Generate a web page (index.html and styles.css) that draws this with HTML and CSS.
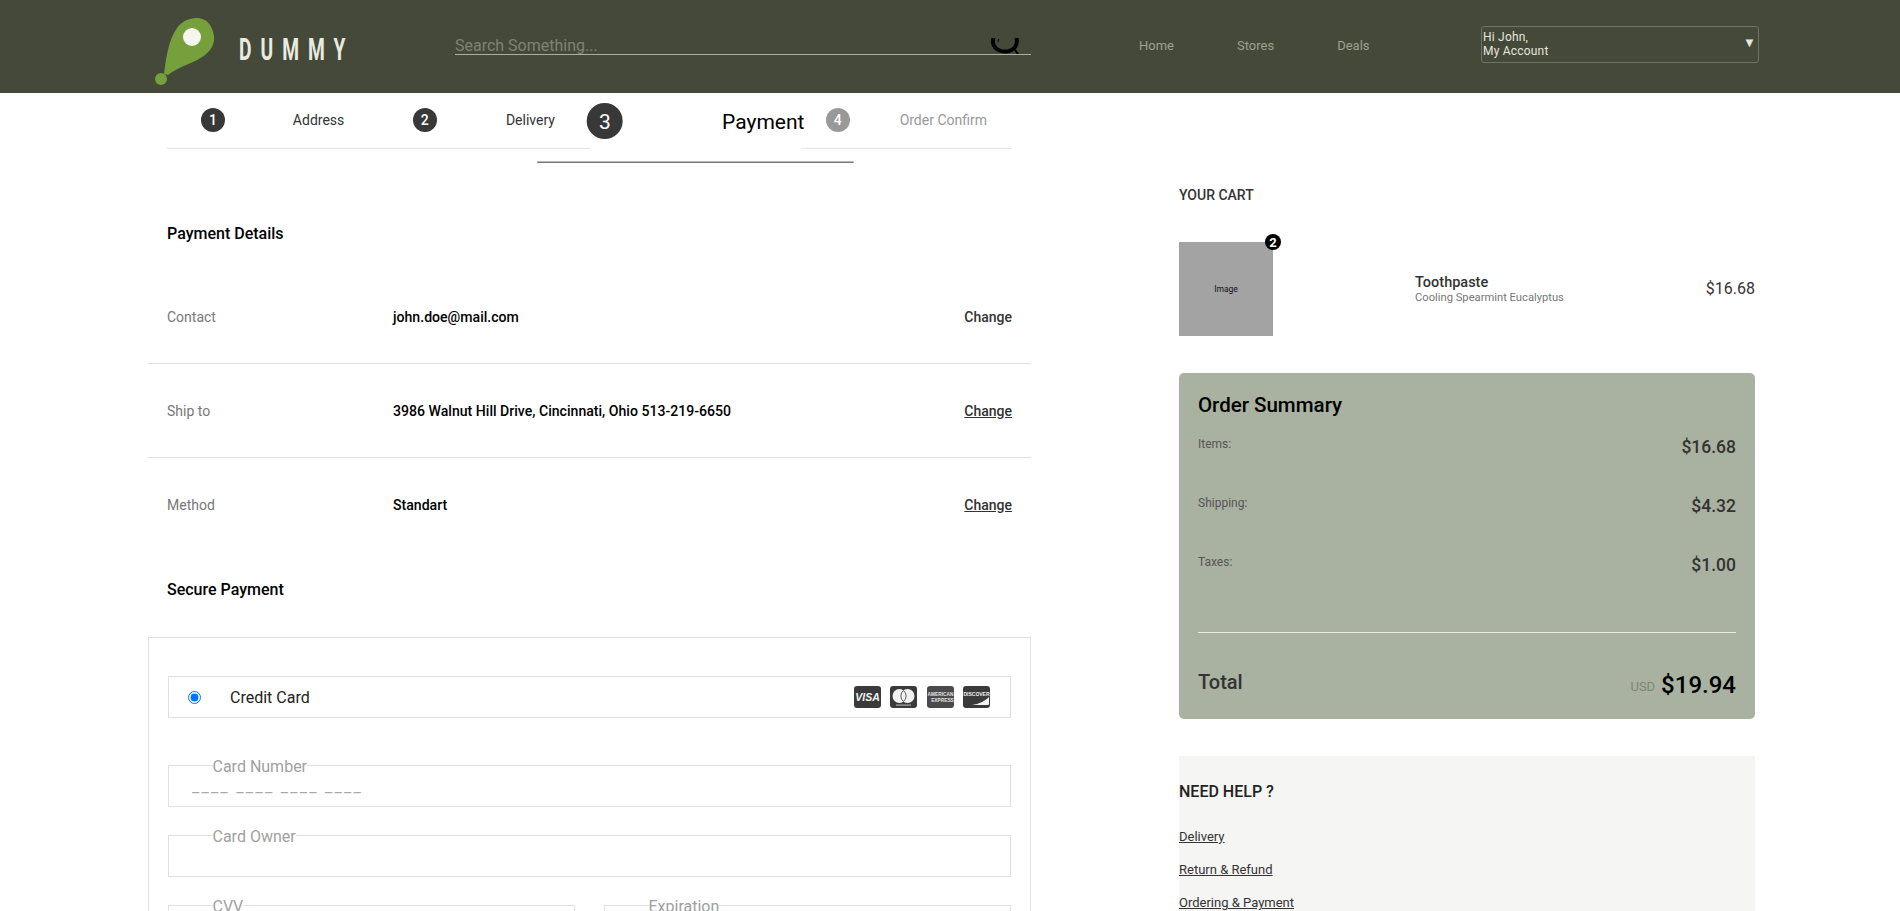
FILE: index.html
```html
<!DOCTYPE html>
<html lang="en">
<head>
    <meta charset="UTF-8">
    <meta name="viewport" content="width=device-width, initial-scale=1.0">
    <title>Checkout - Payment</title>
    <link rel="stylesheet" href="styles.css">
</head>
<body>
    <header class="topbar">
        <a class="logo" href="#">
            <svg class="logo-mark" width="62" height="70" viewBox="0 0 62 70">
                <path d="M9 57 C11 42 13 24 22 11 C30 0 48 -3 55 8 C62 20 60 30 50 38 C40 46 22 50 13 58 Z" fill="#76a03c"/>
                <circle cx="6" cy="62" r="6" fill="#76a03c"/>
                <circle cx="37" cy="20" r="9" fill="#f6f6ee"/>
            </svg>
            <span class="logo-text">DUMMY</span>
        </a>
        <form class="search">
            <input class="search-input" type="text" placeholder="Search Something...">
            <svg class="search-icon" width="28" height="16" viewBox="0 0 28 16">
                <path d="M2.5 0 C0 8 6 13.5 14 13.5 C22 13.5 27.5 8 25.5 0" fill="none" stroke="#000" stroke-width="4"/>
                <path d="M24 12 L27 16" stroke="#000" stroke-width="2"/>
                <path d="M7.5 1 L7 4" stroke="#000" stroke-width="1"/>
            </svg>
        </form>
        <nav class="nav">
            <a href="#">Home</a>
            <a href="#">Stores</a>
            <a href="#">Deals</a>
        </nav>
        <div class="account">
            <div>Hi John,<br>My Account</div>
            <span class="account-arrow">&#9660;</span>
        </div>
    </header>

    <main class="page">
        <section class="left">
            <ol class="steps">
                <li class="step"><span class="step-num">1</span><span>Address</span></li>
                <li class="step"><span class="step-num">2</span><span>Delivery</span></li>
                <li class="step active"><span class="step-num">3</span><span>Payment</span></li>
                <li class="step todo"><span class="step-num">4</span><span>Order Confirm</span></li>
            </ol>

            <h2 class="section-title details-title">Payment Details</h2>
            <div class="info-row">
                <span class="info-label">Contact</span>
                <span class="info-value">john.doe@mail.com</span>
                <a class="info-change plain" href="#">Change</a>
            </div>
            <div class="info-row">
                <span class="info-label">Ship to</span>
                <span class="info-value">3986 Walnut Hill Drive, Cincinnati, Ohio 513-219-6650</span>
                <a class="info-change" href="#">Change</a>
            </div>
            <div class="info-row last">
                <span class="info-label">Method</span>
                <span class="info-value">Standart</span>
                <a class="info-change" href="#">Change</a>
            </div>

            <h2 class="section-title secure-title">Secure Payment</h2>
            <div class="pay-box">
                <label class="pay-option">
                    <input type="radio" name="pay" checked>
                    <span class="pay-name">Credit Card</span>
                    <span class="cards">
                        <svg width="27" height="22" viewBox="0 0 27 22"><rect width="27" height="22" rx="3" fill="#3a3a3a"/><text x="13.5" y="15" text-anchor="middle" class="card-visa">VISA</text></svg>
                        <svg width="27" height="22" viewBox="0 0 27 22"><rect width="27" height="22" rx="3" fill="#3a3a3a"/><circle cx="9.5" cy="10" r="7" fill="#f2f2f2"/><circle cx="17.5" cy="10" r="7" fill="#f2f2f2"/><path d="M13.5 4.5 a7 7 0 0 1 0 11 a7 7 0 0 1 0 -11" fill="none" stroke="#3a3a3a" stroke-width=".8"/><rect x="6" y="18.5" width="15" height="1.2" fill="#aaa"/></svg>
                        <svg width="27" height="22" viewBox="0 0 27 22"><rect width="27" height="22" rx="3" fill="#4a4a4a"/><text x="13.5" y="9.5" text-anchor="middle" class="card-amex">AMERICAN</text><text x="15.5" y="15.5" text-anchor="middle" class="card-amex">EXPRESS</text></svg>
                        <svg width="27" height="22" viewBox="0 0 27 22"><rect width="27" height="22" rx="3" fill="#3a3a3a"/><path d="M26 11 V18 a1 1 0 0 1 -1 1 H9 C16 18 22 15 26 11 Z" fill="#f2f2f2"/><text x="13.5" y="10" text-anchor="middle" class="card-disc">DISCOVER</text></svg>
                    </span>
                </label>

                <fieldset class="field">
                    <legend>Card Number</legend>
                    <input class="field-input mask" type="text" placeholder="____ ____ ____ ____">
                </fieldset>
                <fieldset class="field">
                    <legend>Card Owner</legend>
                    <input class="field-input" type="text">
                </fieldset>
                <div class="field-pair">
                    <fieldset class="field">
                        <legend>CVV</legend>
                        <input class="field-input" type="text">
                    </fieldset>
                    <fieldset class="field">
                        <legend>Expiration</legend>
                        <input class="field-input" type="text">
                    </fieldset>
                </div>
            </div>
        </section>

        <aside class="right">
            <h3 class="cart-title">YOUR CART</h3>
            <div class="cart-item">
                <div class="thumb">Image<span class="thumb-badge">2</span></div>
                <div class="cart-info">
                    <div class="cart-name">Toothpaste</div>
                    <div class="cart-desc">Cooling Spearmint Eucalyptus</div>
                </div>
                <div class="cart-price">$16.68</div>
            </div>

            <div class="summary">
                <h3 class="summary-title">Order Summary</h3>
                <div class="summary-row"><span>Items:</span><strong>$16.68</strong></div>
                <div class="summary-row"><span>Shipping:</span><strong>$4.32</strong></div>
                <div class="summary-row"><span>Taxes:</span><strong>$1.00</strong></div>
                <div class="summary-total">
                    <span class="total-label">Total</span>
                    <span class="total-value"><small>USD</small> $19.94</span>
                </div>
            </div>

            <div class="help">
                <h3 class="help-title">NEED HELP ?</h3>
                <a href="#">Delivery</a>
                <a href="#">Return &amp; Refund</a>
                <a href="#">Ordering &amp; Payment</a>
            </div>
        </aside>
    </main>
</body>
</html>
```

FILE: styles.css
```css
html, body {
    height: 911px;
    overflow: hidden;
}
body {
    margin: 0;
    font-family: Roboto, "Liberation Sans", sans-serif;
    font-size: 14px;
    color: #333;
    background-color: #fff;
}
a {
    color: inherit;
}

/* top bar */
.topbar {
    height: 93px;
    background-color: #45493a;
    display: flex;
    align-items: center;
    padding-left: 155px;
    box-sizing: border-box;
}
.logo {
    width: 300px;
    display: flex;
    align-items: center;
    text-decoration: none;
}
.logo-mark {
    margin-top: 11px;
}
.logo-text {
    margin-left: 22px;
    margin-top: 6px;
    font-size: 31px;
    font-weight: 700;
    letter-spacing: 14.5px;
    color: #e9ebe0;
    transform: scaleX(.62);
    transform-origin: left;
}
.search {
    width: 576px;
    position: relative;
}
.search-input {
    width: 100%;
    box-sizing: border-box;
    height: 18px;
    margin-top: -1px;
    display: block;
    padding: 0;
    background: none;
    border: none;
    border-bottom: 1px solid #a9b1a0;
    font-family: inherit;
    font-size: 16px;
    outline: none;
}
.search-input::placeholder {
    color: #7f8374;
}
.search-icon {
    position: absolute;
    right: 12px;
    bottom: 1px;
}
.nav {
    width: 450px;
    padding-left: 108px;
    box-sizing: border-box;
    display: flex;
    gap: 63px;
    margin-top: -2px;
}
.nav a {
    font-size: 13px;
    color: #98a38b;
    text-decoration: none;
}
.account {
    width: 278px;
    height: 37px;
    box-sizing: border-box;
    border: 1px solid #6e7364;
    border-radius: 3px;
    margin-top: -4px;
    padding-left: 1px;
    display: flex;
    justify-content: space-between;
    align-items: center;
    font-size: 12px;
    letter-spacing: .2px;
    line-height: 14px;
    color: #e4e7dc;
}
.account > div {
    margin-top: -1px;
}
.account-arrow {
    font-size: 13px;
    padding-right: 2px;
    margin-top: -3px;
}

/* page */
.page {
    display: flex;
    padding-left: 148px;
}
.left {
    width: 883px;
}
.right {
    width: 576px;
    margin-left: 148px;
}

/* steps */
.steps {
    list-style: none;
    margin: 0 19px;
    padding: 0;
    display: flex;
}
.step {
    width: 25%;
    height: 56px;
    box-sizing: border-box;
    padding-bottom: 2px;
    border-bottom: 1px solid #e5e5e5;
    display: flex;
    justify-content: space-around;
    align-items: center;
    color: #333;
}
.step-num {
    width: 24px;
    height: 24px;
    border-radius: 50%;
    background-color: #383838;
    color: #fff;
    font-weight: 500;
    display: flex;
    align-items: center;
    justify-content: center;
}
.step.active {
    transform: scale(1.5);
    padding-bottom: 0;
    color: #000;
    border-bottom-color: #777;
}
.step.active .step-num {
    font-weight: 400;
}
.step.todo {
    color: #999;
}
.step.todo .step-num {
    background-color: #999;
}

/* payment details */
.section-title {
    margin: 0 19px;
    font-size: 16px;
    font-weight: 500;
    color: #000;
    line-height: 20px;
}
.details-title {
    margin-top: 75px;
    margin-bottom: 26px;
}
.secure-title {
    margin-top: 28px;
    margin-bottom: 37px;
}
.info-row {
    height: 94px;
    box-sizing: border-box;
    padding: 0 19px;
    border-bottom: 1px solid #e0e0e0;
    display: flex;
    align-items: center;
}
.info-row.last {
    border-bottom: none;
}
.info-label {
    width: 226px;
    color: #777;
}
.info-value {
    flex: 1;
    font-size: 14.1px;
    font-weight: 500;
    color: #000;
}
.info-change {
    font-weight: 500;
    color: #333;
}
.info-change.plain {
    text-decoration: none;
}

/* payment box */
.pay-box {
    border: 1px solid #e0e0e0;
    padding: 38px 19px 0;
}
.pay-option {
    height: 42px;
    box-sizing: border-box;
    border: 1px solid #e0e0e0;
    padding-left: 19px;
    padding-right: 20px;
    display: flex;
    align-items: center;
}
.pay-option input {
    margin: 0;
    width: 13px;
    height: 13px;
}
.pay-name {
    margin-left: 29px;
    font-size: 16px;
    color: #222;
    flex: 1;
}
.cards {
    display: flex;
    gap: 9.5px;
}
.card-visa {
    font-family: "Liberation Sans", sans-serif;
    font-size: 10.5px;
    font-weight: 700;
    font-style: italic;
    fill: #f2f2f2;
}
.card-amex {
    font-family: "Liberation Sans", sans-serif;
    font-size: 4.8px;
    font-weight: 700;
    fill: #e4e4e4;
}
.card-disc {
    font-family: "Liberation Sans", sans-serif;
    font-size: 5px;
    font-weight: 700;
    fill: #f2f2f2;
}
.field {
    margin: 38px 0 0;
    padding: 0 23px;
    height: 51px;
    box-sizing: border-box;
    border: 1px solid #e0e0e0;
    min-width: 0;
}
.field legend {
    margin-left: 20.5px;
    padding: 4px 0 0;
    font-size: 16px;
    line-height: 14px;
    color: #a0a0a0;
}
.field + .field {
    margin-top: 19px;
}
.field-input {
    width: 100%;
    height: 24px;
    margin-top: 0;
    padding: 0;
    display: block;
    border: none;
    background: none;
    font-family: inherit;
    font-size: 16px;
    outline: none;
}
.mask::placeholder {
    color: #a8a8a8;
    letter-spacing: 2.3px;
}
.field-pair {
    display: grid;
    grid-template-columns: 407px 407px;
    gap: 29px;
    margin-top: 19px;
}
.field-pair .field {
    margin-top: 0;
}

/* cart */
.cart-title {
    margin: 93px 0 0;
    font-size: 14px;
    line-height: 18px;
    font-weight: 500;
    color: #333;
}
.cart-item {
    margin-top: 38px;
    display: flex;
    align-items: center;
}
.thumb {
    width: 94px;
    height: 94px;
    background-color: #a3a3a3;
    color: #111;
    font-size: 8.5px;
    display: flex;
    align-items: center;
    justify-content: center;
    position: relative;
}
.thumb-badge {
    position: absolute;
    top: -8px;
    right: -8px;
    width: 16px;
    height: 16px;
    border-radius: 50%;
    background-color: #000;
    color: #fff;
    font-size: 13px;
    font-weight: 700;
    display: flex;
    align-items: center;
    justify-content: center;
}
.cart-info {
    margin-left: 142px;
    flex: 1;
}
.cart-name {
    font-size: 14.5px;
    font-weight: 500;
    line-height: 17px;
    color: #333;
}
.cart-desc {
    font-size: 11.2px;
    line-height: 13px;
    color: #777;
}
.cart-price {
    font-size: 16px;
    color: #333;
    margin-top: -2px;
}

/* summary */
.summary {
    margin-top: 37px;
    height: 346px;
    box-sizing: border-box;
    padding: 20px 19px 0;
    background-color: #a9b1a0;
    border-radius: 5px;
}
.summary-title {
    margin: 0;
    font-size: 20.5px;
    line-height: 24px;
    font-weight: 500;
    color: #000;
}
.summary-row {
    height: 59px;
    display: flex;
    justify-content: space-between;
    align-items: flex-start;
    font-size: 12px;
    color: #555;
}
.summary-row strong {
    font-size: 17.5px;
    font-weight: 500;
    color: #333;
    margin-top: 20px;
}
.summary-row span {
    margin-top: 20px;
}
.summary-total {
    margin-top: 38px;
    padding-top: 31px;
    border-top: 1px solid #e8ebe3;
    display: flex;
    justify-content: space-between;
    align-items: center;
}
.total-label {
    font-size: 20px;
    font-weight: 500;
    color: #333;
}
.total-value {
    font-size: 24px;
    font-weight: 500;
    color: #000;
    margin-top: 7px;
}
.total-value small {
    font-size: 13px;
    font-weight: 400;
    color: #7e8578;
    vertical-align: 2px;
}

/* help */
.help {
    margin-top: 37px;
    height: 300px;
    background-color: #f5f5f3;
    padding-top: 26px;
    box-sizing: border-box;
}
.help-title {
    margin: 0 0 27px;
    font-size: 16px;
    line-height: 20px;
    font-weight: 500;
    color: #222;
}
.help a {
    display: block;
    font-size: 13px;
    line-height: 16px;
    margin-bottom: 17px;
    color: #333;
}
```
